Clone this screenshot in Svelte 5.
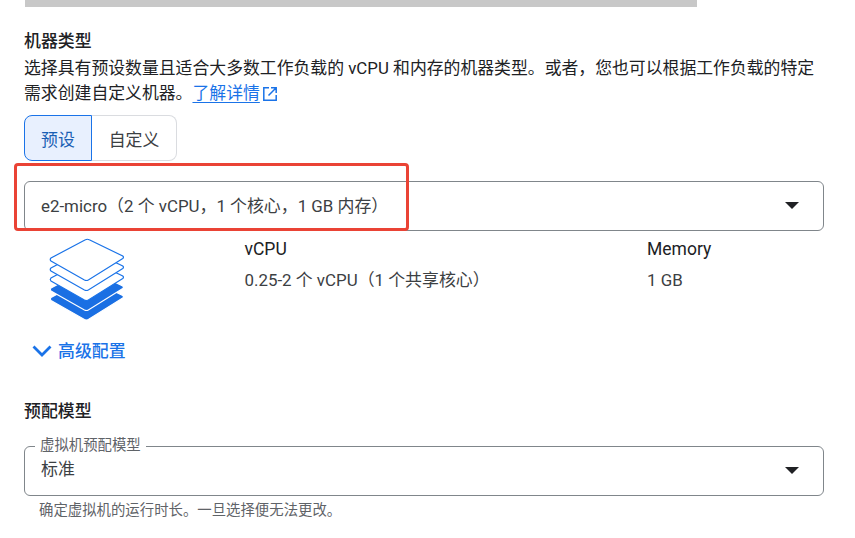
<script>
  const details = [
    { label: 'vCPU', value: '0.25-2 个 vCPU（1 个共享核心）' },
    { label: 'Memory', value: '1 GB' }
  ];

  // layers of the stack icon, bottom first
  const layers = [
    { y: 39.5, filled: true },
    { y: 30, filled: true },
    { y: 20, filled: false },
    { y: 10, filled: false },
    { y: 0, filled: false }
  ];
</script>

<main>
  <div class="top-bar"></div>

  <section class="machine">
    <h2>机器类型</h2>
    <p class="desc">
      选择具有预设数量且适合大多数工作负载的 vCPU 和内存的机器类型。或者，您也可以根据工作负载的特定需求创建自定义机器。<a href="#learn">了解详情</a><svg class="ext" viewBox="0 0 14 14" width="14" height="14" aria-hidden="true">
        <path d="M6 .8H.8v12.400h12.400V8M8 .8h5.200V6M13.200 .8 5.500 8.500" fill="none" stroke="#1a73e8" stroke-width="1.500" />
      </svg>
    </p>

    <div class="toggle">
      <button class="active">预设</button>
      <button>自定义</button>
    </div>

    <div class="select-wrap">
      <div class="select">
        <span>e2-micro（2 个 vCPU，1 个核心，1 GB 内存）</span>
        <i class="caret"></i>
      </div>
      <div class="highlight"></div>
    </div>

    <div class="spec">
      <svg class="stack" viewBox="0 0 78 84" width="78" height="84" aria-hidden="true">
        {#each layers as l}
          <path
            transform="translate(2 {l.y + 1}) scale(.97 1)"
            d="M36.500 .8Q38.500 -.3 40.500 .8L75 17Q76.500 18.300 75 19.500L39.500 41Q37.500 42 35.500 41L1 22Q-.5 20.500 1 19Z"
            fill={l.filled ? '#1a6fe3' : '#fff'}
            stroke={l.filled ? '#fff' : '#1a73e8'}
            stroke-width="1.200"
          />
        {/each}
      </svg>
      <div class="spec-cols">
        {#each details as d}
          <div class="spec-col">
            <div class="spec-label">{d.label}</div>
            <div class="spec-value">{d.value}</div>
          </div>
        {/each}
      </div>
    </div>

    <div class="advanced">
      <svg viewBox="0 0 20 12" width="20" height="12" aria-hidden="true">
        <path d="M1.500 1.500 10 10l8.500-8.500" fill="none" stroke="#1a73e8" stroke-width="2.800" />
      </svg>
      <span>高级配置</span>
    </div>
  </section>

  <section class="provision">
    <h2>预配模型</h2>
    <div class="field">
      <span class="float-label">虚拟机预配模型</span>
      <span>标准</span>
      <i class="caret"></i>
    </div>
    <p class="hint">确定虚拟机的运行时长。一旦选择便无法更改。</p>
  </section>
</main>

<style>
  :global(body) {
    background: #fff;
  }

  main {
    width: 855px;
    height: 538px;
    overflow: hidden;
    font-family: Roboto, 'Noto Sans CJK SC', sans-serif;
    font-size: 16.9px;
    color: #202124;
  }

  .top-bar {
    width: 672px;
    height: 7px;
    margin-left: 25px;
    background: #c8c8c8;
  }

  section {
    padding: 0 31px 0 24px;
  }

  .machine {
    padding-top: 22px;
  }

  h2 {
    margin: 0;
    font-size: 16.9px;
    font-weight: 450;
    line-height: 24px;
  }

  .desc {
    margin: 3px 0 0;
    line-height: 24.5px;
    width: 800px;
    font-size: 16.85px;
    color: #202124;
  }

  .desc a {
    color: #1a73e8;
    text-decoration: underline;
    text-underline-offset: 3px;
  }

  .ext {
    margin-left: 3px;
    vertical-align: -2px;
  }

  .toggle {
    display: flex;
    margin-top: 10px;
    width: 153px;
    height: 46px;
  }

  .toggle button {
    font: inherit;
    color: #3c4043;
    background: #fff;
    border: 1px solid #dadce0;
    border-left: 0;
    border-radius: 0 8px 8px 0;
    padding: 0;
    flex: 1;
  }

  .toggle .active {
    flex: 0 0 68px;
    color: #1a5fb4;
    background: #e8f0fe;
    border: 1px solid #1a73e8;
    border-radius: 8px 0 0 8px;
  }

  .select-wrap {
    position: relative;
    margin-top: 20px;
  }

  .select,
  .field {
    position: relative;
    display: flex;
    align-items: center;
    box-sizing: border-box;
    width: 800px;
    height: 50px;
    padding: 0 16px 3px;
    border: 1px solid #80868b;
    border-radius: 6px;
    color: #3c4043;
  }

  .highlight {
    position: absolute;
    left: -10px;
    top: -18px;
    width: 395px;
    height: 68px;
    box-sizing: border-box;
    border: 3px solid #ea4335;
    border-radius: 4px;
  }

  .caret {
    position: absolute;
    right: 24px;
    top: 20px;
    width: 0;
    height: 0;
    border-left: 7.500px solid transparent;
    border-right: 7.500px solid transparent;
    border-top: 7.500px solid #202124;
  }

  .spec {
    display: flex;
    margin-top: 6px;
    height: 88px;
  }

  .stack {
    margin: 1px 0 0 24px;
    flex: none;
  }

  .spec-cols {
    display: flex;
    margin-left: 118.500px;
  }

  .spec-col {
    width: 402.500px;
  }

  .spec-label {
    font-size: 17.5px;
    font-weight: 450;
    line-height: 24px;
  }

  .spec-value {
    margin-top: 7px;
    line-height: 24px;
    color: #3c4043;
  }

  .advanced {
    display: flex;
    align-items: center;
    gap: 6px;
    margin: 14px 0 0 8px;
    color: #1a73e8;
    font-weight: 500;
    line-height: 24px;
  }

  .provision {
    padding-top: 36px;
  }

  .field {
    margin-top: 23px;
    padding-bottom: 8px;
  }

  .float-label {
    position: absolute;
    left: 10px;
    top: -9px;
    padding: 0 5px;
    background: #fff;
    font-size: 14.4px;
    color: #5f6368;
    line-height: 16px;
  }

  .hint {
    margin: 5px 0 0 15px;
    font-size: 14.4px;
    line-height: 20px;
    color: #5f6368;
  }
</style>
